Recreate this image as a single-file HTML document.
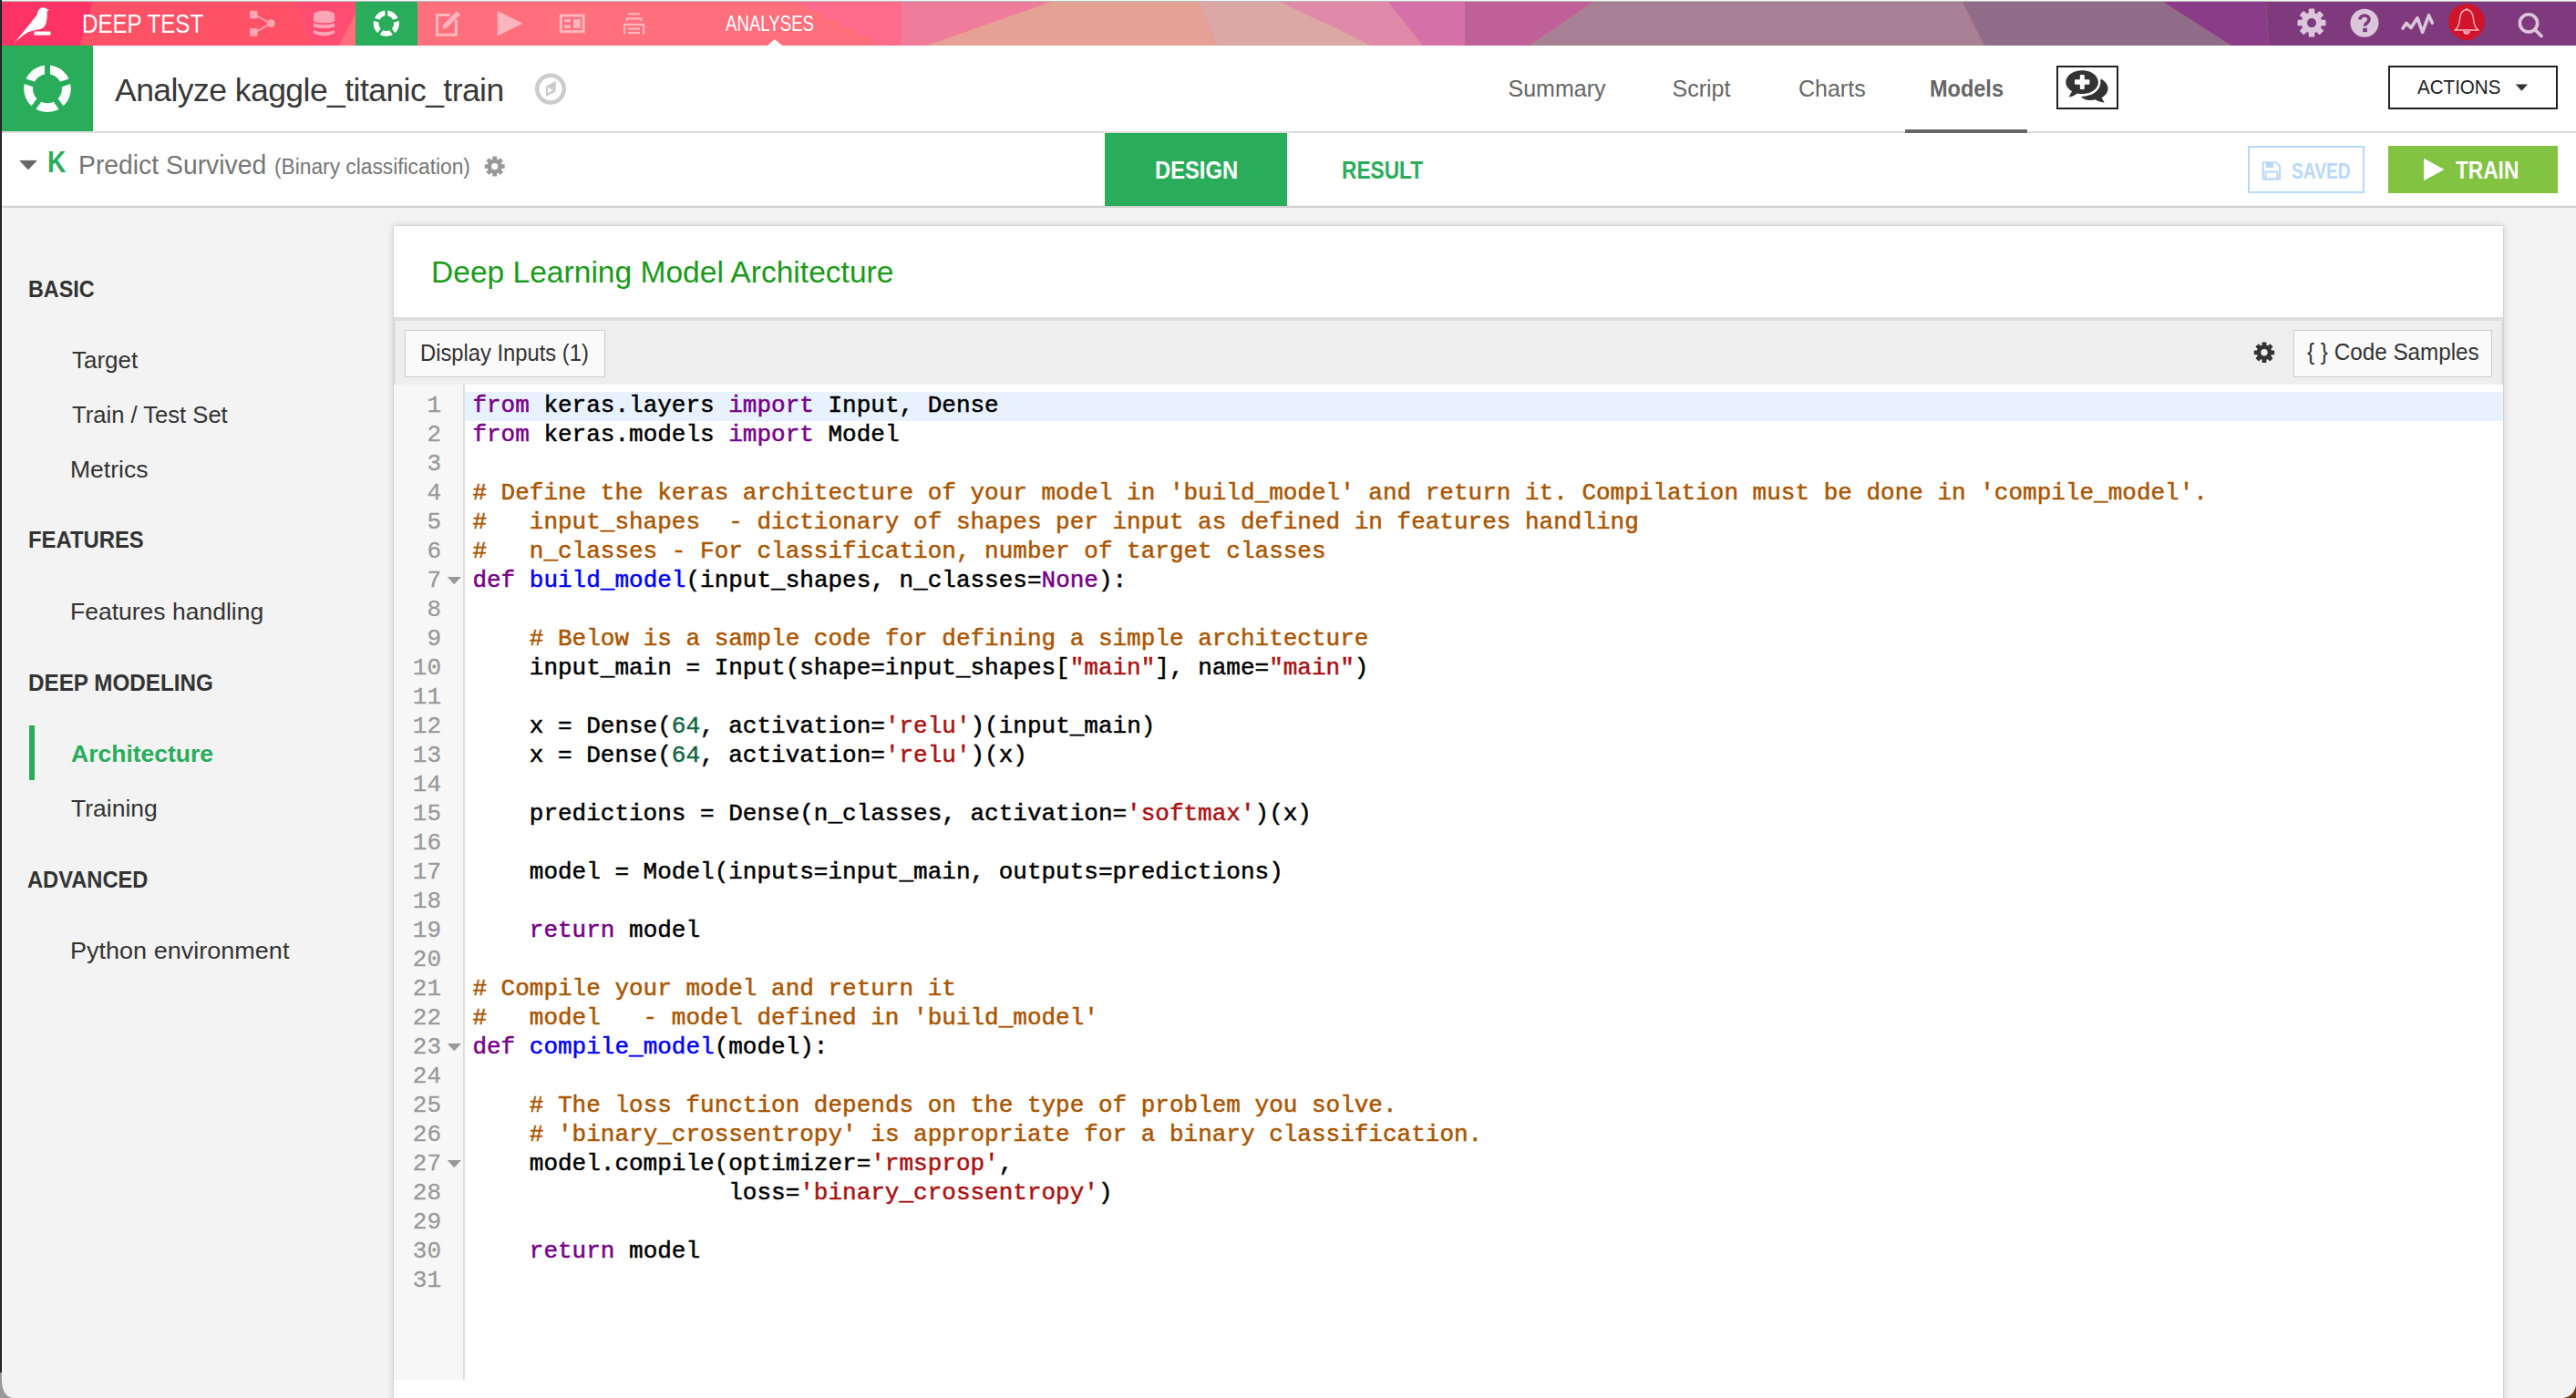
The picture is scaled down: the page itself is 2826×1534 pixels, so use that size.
<!DOCTYPE html><html><head><meta charset="utf-8"><style>
html,body{margin:0;padding:0;}
body{width:2826px;height:1534px;overflow:hidden;position:relative;background:#f3f3f3;font-family:"Liberation Sans", sans-serif;}
.t{position:absolute;white-space:pre;line-height:1;}
.code{position:absolute;font-family:"Liberation Mono", monospace;font-size:26px;line-height:32px;white-space:pre;color:#000;-webkit-text-stroke:0.5px currentColor;}
.k{color:#770088} .d{color:#0000ff} .c{color:#aa5500} .s{color:#aa1111} .n{color:#116644} .a{color:#770088}
.ln{position:absolute;font-family:"Liberation Mono", monospace;font-size:26px;line-height:32px;color:#999;text-align:right;width:60px;white-space:pre;-webkit-text-stroke:0.3px currentColor;}
svg{position:absolute;left:0;top:0;overflow:visible}
</style></head><body><svg width="2826" height="50" viewBox="0 0 2826 50">
<rect x="0" y="0" width="2826" height="1" fill="#f6f6f6"/><rect x="0" y="1" width="2826" height="1" fill="#b5b8b6"/>
<polygon points="0,2 2826,2 2826,50 0,50" fill="#ff6e7c"/>
<polygon points="0,2 102,2 88,50 0,50" fill="#ff3366"/>
<polygon points="102,2 323,2 342,50 88,50" fill="#ff5266"/>
<polygon points="323,2 390,2 390,15 372,50 342,50" fill="#ff4d72"/>
<polygon points="390,15 390,50 372,50" fill="#ff6e7a"/>
<polygon points="458,2 873,2 968,50 458,50" fill="#ff707c"/>
<polygon points="873,2 989,2 989,50 968,50" fill="#ff6b8b"/>
<polygon points="989,2 1153,2 1016,50 989,50" fill="#f07c9c"/>
<polygon points="1153,2 1315,2 1335,50 1016,50" fill="#e5a196"/>
<polygon points="1315,2 1405,2 1504,50 1335,50" fill="#dba8a5"/>
<polygon points="1405,2 1523,2 1561,50 1504,50" fill="#de8aa8"/>
<polygon points="1450,23 1504,50 1450,50" fill="#dba8a5"/>
<polygon points="1523,2 1607,2 1607,50 1561,50" fill="#d670a8"/>
<polygon points="1607,2 1748,2 1678,50 1607,50" fill="#c06098"/>
<polygon points="1748,2 2153,2 2177,50 1678,50" fill="#a88094"/>
<polygon points="2153,2 2373,2 2448,50 2177,50" fill="#906c88"/>
<polygon points="2373,2 2486,2 2489,50 2448,50" fill="#8a3c88"/>
<polygon points="2486,2 2826,2 2826,50 2489,50" fill="#7e3a7c"/>
<polygon points="390,2 458,2 458,50 390,50" fill="#29ad5b"/>
<path d="M16.3,46.5 L40.5,16.5 C41.5,12 43,9 46.5,8.3 C49,8 50.8,9 51.8,10.2 L54,10.3 L51.6,12.6 C51.9,16 51.8,22 50.3,26.5 C48.8,30 46,31.8 43,32.2 L36.5,33.6 C30,35 24,39.5 16.3,46.5 Z" fill="#fff"/>
<rect x="37.5" y="34.5" width="18" height="4.2" fill="#fff"/>
<g fill="#ffa5b0"><rect x="274" y="11.8" width="8.5" height="8.5"/><rect x="274" y="31.2" width="8.5" height="8.5"/><circle cx="297.3" cy="25.7" r="4.4"/></g>
<path d="M281,17 L297,25.7 L281,35" stroke="#ffa5b0" stroke-width="1.6" fill="none"/>
<g fill="#ffa5b8"><ellipse cx="355.5" cy="16" rx="11.6" ry="4.2"/><rect x="343.9" y="16" width="23.2" height="6.5"/><ellipse cx="355.5" cy="22.3" rx="11.6" ry="3"/><path d="M343.9,25.3 Q355.5,29 367.1,25.3 L367.1,29.5 Q355.5,33 343.9,29.5 Z"/><path d="M343.9,33.3 Q355.5,37 367.1,33.3 L367.1,36.5 Q355.5,42 343.9,36.5 Z"/></g>
<circle cx="423.8" cy="25.7" r="11.25" fill="none" stroke="#fff" stroke-width="5.699999999999999"/><rect x="422.3" y="10.6" width="3.0" height="7.699999999999999" fill="#29ad5b" transform="rotate(0 423.8 25.7)"/><rect x="422.3" y="10.6" width="3.0" height="7.699999999999999" fill="#29ad5b" transform="rotate(72 423.8 25.7)"/><rect x="422.3" y="10.6" width="3.0" height="7.699999999999999" fill="#29ad5b" transform="rotate(144 423.8 25.7)"/><rect x="422.3" y="10.6" width="3.0" height="7.699999999999999" fill="#29ad5b" transform="rotate(216 423.8 25.7)"/><rect x="422.3" y="10.6" width="3.0" height="7.699999999999999" fill="#29ad5b" transform="rotate(288 423.8 25.7)"/>
<path d="M494,16.6 L479.5,16.6 L479.5,38.3 L500.4,38.3 L500.4,22" stroke="#ffb5bd" stroke-width="3" fill="none"/>
<path d="M485.2,31.7 L486.5,26.8 L501.2,12.2 L505,16 L490.3,30.5 Z" fill="#ffb5bd"/>
<polygon points="545.8,12.1 545.8,39.5 573.5,25.7" fill="#ffb5bd"/>
<rect x="615.4" y="17.1" width="24.7" height="17.5" stroke="#ffb5bd" stroke-width="3" fill="none"/>
<g fill="#ffb5bd"><rect x="619" y="21.2" width="7" height="3"/><rect x="619" y="27.5" width="7" height="3.5"/><rect x="629" y="21" width="7.6" height="10"/></g>
<g stroke="#ffb5bd" fill="none" stroke-width="2.2" stroke-linejoin="round"><path d="M689,15.3 H702"/><path d="M687.6,23.2 V20.3 H703.6 V23.2"/><path d="M685.1,37.4 V26.8 H706.1 V37.4"/><path d="M689,31.5 H702"/><path d="M689,36 H702"/></g>
<polygon points="842,50 858,50 850,43" fill="#fff"/>
<g fill="#dcc6dc"><circle cx="2536" cy="25.1" r="11.3"/><rect x="2532.75" y="9.600000000000001" width="6.5" height="15.5" rx="0.975" transform="rotate(0.0 2536 25.1)"/><rect x="2532.75" y="9.600000000000001" width="6.5" height="15.5" rx="0.975" transform="rotate(45.0 2536 25.1)"/><rect x="2532.75" y="9.600000000000001" width="6.5" height="15.5" rx="0.975" transform="rotate(90.0 2536 25.1)"/><rect x="2532.75" y="9.600000000000001" width="6.5" height="15.5" rx="0.975" transform="rotate(135.0 2536 25.1)"/><rect x="2532.75" y="9.600000000000001" width="6.5" height="15.5" rx="0.975" transform="rotate(180.0 2536 25.1)"/><rect x="2532.75" y="9.600000000000001" width="6.5" height="15.5" rx="0.975" transform="rotate(225.0 2536 25.1)"/><rect x="2532.75" y="9.600000000000001" width="6.5" height="15.5" rx="0.975" transform="rotate(270.0 2536 25.1)"/><rect x="2532.75" y="9.600000000000001" width="6.5" height="15.5" rx="0.975" transform="rotate(315.0 2536 25.1)"/></g>
<circle cx="2536" cy="25.1" r="5" fill="#7e3a7c"/>
<circle cx="2594" cy="25.3" r="15.5" fill="#dcc6dc"/>
<path d="M2589,21.5 C2589,15.5 2599,15.5 2599,21.5 C2599,25 2594.5,25 2594.5,28.5" stroke="#7e3a7c" stroke-width="3.6" fill="none"/><rect x="2592.2" y="30.8" width="4.6" height="4.3" fill="#7e3a7c"/>
<polyline points="2636,31 2640,25.4 2645,30.5 2652,19.7 2657.6,35.3 2664.5,16.8 2668.3,25.2" stroke="#dcc6dc" stroke-width="3.6" fill="none" stroke-linecap="round" stroke-linejoin="round"/>
<circle cx="2706" cy="23.9" r="20" fill="#d0142c"/>
<path d="M2706,10.5 C2701,11 2699,14.5 2698.5,21 C2698,27 2697,30 2693.5,33 L2718.5,33 C2715,30 2714,27 2713.5,21 C2713,14.5 2711,11 2706,10.5 Z" stroke="#f6b8c2" stroke-width="1.4" fill="none"/>
<path d="M2703,34 A3,3 0 0 0 2709,34" stroke="#f6b8c2" stroke-width="1.4" fill="#e88"/>
<circle cx="2706" cy="10.2" r="1.2" fill="#f6b8c2"/>
<circle cx="2774" cy="25.4" r="9.6" stroke="#dcc6dc" stroke-width="3.6" fill="none"/><path d="M2781,32.5 L2788,39.5" stroke="#dcc6dc" stroke-width="3.8" stroke-linecap="round"/>
</svg>
<div class="t" style="left:90.0px;top:11.2px;font-size:30px;color:#fff;font-weight:normal;transform:scaleX(0.804);transform-origin:0 0;">DEEP TEST</div>
<div class="t" style="left:796.0px;top:14.5px;font-size:23px;color:#fff;font-weight:normal;transform:scaleX(0.81);transform-origin:0 0;">ANALYSES</div>
<div style="position:absolute;left:0px;top:0px;width:1px;height:1506px;background:#262a2e;z-index:5"></div>
<div style="position:absolute;left:1px;top:0px;width:1px;height:1506px;background:#121c1e;z-index:5"></div>
<div style="position:absolute;left:0px;top:1506px;width:2px;height:28px;background:#999;z-index:5"></div>
<div style="position:absolute;left:2px;top:227px;width:1px;height:1290px;background:#fff;z-index:5"></div>
<svg width="2826" height="1534" style="z-index:6"><path d="M0,1514 L2,1514 Q2,1532 14,1534 L0,1534 Z" fill="#9a9a9a"/><path d="M2826,1520 Q2824,1532 2812,1534 L2826,1534 Z" fill="#6b3a10"/></svg>
<div style="position:absolute;left:2px;top:50px;width:2824px;height:94px;background:#fff"></div>
<div style="position:absolute;left:2px;top:50px;width:100px;height:94px;background:#29ad5b"></div>
<div style="position:absolute;left:2px;top:144px;width:2824px;height:2px;background:#dddddd"></div>
<div style="position:absolute;left:2px;top:146px;width:2824px;height:79px;background:#fff"></div>
<div style="position:absolute;left:2px;top:226px;width:2824px;height:1.6px;background:#d0d0d0"></div>
<svg width="2826" height="240">
<circle cx="52" cy="97.3" r="20.9" fill="none" stroke="#fff" stroke-width="9.8"/><rect x="49.0" y="70.5" width="6.0" height="11.8" fill="#29ad5b" transform="rotate(0 52 97.3)"/><rect x="49.0" y="70.5" width="6.0" height="11.8" fill="#29ad5b" transform="rotate(72 52 97.3)"/><rect x="49.0" y="70.5" width="6.0" height="11.8" fill="#29ad5b" transform="rotate(144 52 97.3)"/><rect x="49.0" y="70.5" width="6.0" height="11.8" fill="#29ad5b" transform="rotate(216 52 97.3)"/><rect x="49.0" y="70.5" width="6.0" height="11.8" fill="#29ad5b" transform="rotate(288 52 97.3)"/>
<circle cx="604" cy="97.6" r="14.8" stroke="#cccccc" stroke-width="4.5" fill="none"/>
<path d="M598.9,94.4 L609.7,88.9 L609.7,100.5 L598.9,106 Z M601.1,96 L601.1,102 L606.4,99.1 Z" fill="#cccccc" fill-rule="evenodd"/>
<path d="M2305.2,86.6 C2310,90 2312.5,93 2312.5,97 C2312.5,101.5 2309.5,105 2305.5,107.3 L2308.8,112.8 C2304,112 2300.5,110.5 2298.5,109.3 C2296.5,109.7 2295,109.9 2293,109.9 C2289,109.9 2285.5,108.5 2283,106.6 L2300,95 Z" fill="#333"/>
<ellipse cx="2284.1" cy="90.2" rx="20.3" ry="15.6" fill="#fff"/>
<path d="M2269.5,106.6 L2273,100.3 C2268,97 2266.3,93.5 2266.3,90.2 C2266.3,83 2274,77.2 2284.1,77.2 C2294,77.2 2301.9,83 2301.9,90.2 C2301.9,97.5 2294,103.1 2284.1,103.1 C2282,103.1 2280.5,103 2279,102.6 C2276,105 2273,106.3 2269.5,106.6 Z" fill="#333"/>
<rect x="2276" y="87.2" width="16.4" height="5.6" rx="1" fill="#fff"/><rect x="2281.8" y="81.9" width="5" height="16.2" rx="1" fill="#fff"/>
<polygon points="2759.8,92.4 2773,92.4 2766.4,99.8" fill="#333"/>
<polygon points="22,176.4 40,176.4 31,185.8" fill="#666" stroke="#666" stroke-width="1" stroke-linejoin="round"/>
<g fill="#999"><circle cx="542.7" cy="182.6" r="8"/><rect x="540.3000000000001" y="171.6" width="4.8" height="11" rx="0.72" transform="rotate(0.0 542.7 182.6)"/><rect x="540.3000000000001" y="171.6" width="4.8" height="11" rx="0.72" transform="rotate(45.0 542.7 182.6)"/><rect x="540.3000000000001" y="171.6" width="4.8" height="11" rx="0.72" transform="rotate(90.0 542.7 182.6)"/><rect x="540.3000000000001" y="171.6" width="4.8" height="11" rx="0.72" transform="rotate(135.0 542.7 182.6)"/><rect x="540.3000000000001" y="171.6" width="4.8" height="11" rx="0.72" transform="rotate(180.0 542.7 182.6)"/><rect x="540.3000000000001" y="171.6" width="4.8" height="11" rx="0.72" transform="rotate(225.0 542.7 182.6)"/><rect x="540.3000000000001" y="171.6" width="4.8" height="11" rx="0.72" transform="rotate(270.0 542.7 182.6)"/><rect x="540.3000000000001" y="171.6" width="4.8" height="11" rx="0.72" transform="rotate(315.0 542.7 182.6)"/></g>
<circle cx="542.7" cy="182.6" r="3.6" fill="#fff"/>
<path d="M2482.7,178.2 H2497 L2501.1,182.3 V196.6 H2482.7 Z" stroke="#b8d8f8" stroke-width="2" fill="none"/>
<rect x="2486" y="178.5" width="8" height="5.5" fill="#b8d8f8"/><rect x="2485.5" y="188.5" width="13" height="8" stroke="#b8d8f8" stroke-width="2" fill="none"/>
</svg>
<div class="t" style="left:126.0px;top:82.2px;font-size:35.5px;color:#383838;font-weight:normal;letter-spacing:-0.55px;">Analyze kaggle_titanic_train</div>
<div class="t" style="left:1654.5px;top:84.9px;font-size:25px;color:#666;font-weight:normal;">Summary</div>
<div class="t" style="left:1834.5px;top:84.9px;font-size:25px;color:#666;font-weight:normal;transform:scaleX(1.0);transform-origin:0 0;">Script</div>
<div class="t" style="left:1973.0px;top:84.9px;font-size:25px;color:#666;font-weight:normal;">Charts</div>
<div class="t" style="left:2117.0px;top:84.9px;font-size:25px;color:#666;font-weight:bold;transform:scaleX(0.94);transform-origin:0 0;">Models</div>
<div style="position:absolute;left:2090px;top:142px;width:134px;height:4px;background:#666;z-index:2"></div>
<div style="position:absolute;left:2256px;top:72px;width:68px;height:48px;border:2px solid #222;box-sizing:border-box"></div>
<div style="position:absolute;left:2620px;top:72px;width:186px;height:48px;border:2px solid #222;box-sizing:border-box"></div>
<div class="t" style="left:2652.3px;top:85.0px;font-size:22.5px;color:#222;font-weight:normal;transform:scaleX(0.914);transform-origin:0 0;">ACTIONS</div>
<div class="t" style="left:51.5px;top:161.3px;font-size:33.5px;color:#29ad5b;font-weight:bold;transform:scaleX(0.84);transform-origin:0 0;">K</div>
<div class="t" style="left:86.0px;top:166.2px;font-size:30px;color:#767676;font-weight:normal;transform:scaleX(0.944);transform-origin:0 0;">Predict Survived</div>
<div class="t" style="left:301.0px;top:172.0px;font-size:23px;color:#767676;font-weight:normal;transform:scaleX(0.989);transform-origin:0 0;">(Binary classification)</div>
<div style="position:absolute;left:1212px;top:146px;width:200px;height:80px;background:#29ad5b"></div>
<div class="t" style="left:1267.0px;top:174.0px;font-size:27px;color:#fff;font-weight:bold;transform:scaleX(0.88);transform-origin:0 0;">DESIGN</div>
<div class="t" style="left:1472.0px;top:174.0px;font-size:27px;color:#29ad5b;font-weight:bold;transform:scaleX(0.841);transform-origin:0 0;">RESULT</div>
<div style="position:absolute;left:2466px;top:160px;width:128px;height:52px;border:2px solid #b8d8f8;box-sizing:border-box"></div>
<div class="t" style="left:2513.7px;top:176.8px;font-size:23px;color:#b8d8f8;font-weight:bold;transform:scaleX(0.834);transform-origin:0 0;">SAVED</div>
<div style="position:absolute;left:2620px;top:160px;width:186px;height:52px;background:#82c341"></div>
<svg width="2826" height="240"><polygon points="2659,173.8 2659,198.2 2681.5,186" fill="#fff"/></svg>
<div class="t" style="left:2694.4px;top:174.1px;font-size:27px;color:#fff;font-weight:bold;transform:scaleX(0.84);transform-origin:0 0;">TRAIN</div>
<div class="t" style="left:31.0px;top:303.5px;font-size:26.5px;color:#333;font-weight:bold;transform:scaleX(0.881);transform-origin:0 0;">BASIC</div>
<div class="t" style="left:79.0px;top:382.1px;font-size:26.5px;color:#333;font-weight:normal;transform:scaleX(0.98);transform-origin:0 0;">Target</div>
<div class="t" style="left:79.0px;top:441.6px;font-size:26.5px;color:#333;font-weight:normal;transform:scaleX(0.966);transform-origin:0 0;">Train / Test Set</div>
<div class="t" style="left:77.0px;top:501.6px;font-size:26.5px;color:#333;font-weight:normal;">Metrics</div>
<div class="t" style="left:31.0px;top:579.2px;font-size:26.5px;color:#333;font-weight:bold;transform:scaleX(0.9);transform-origin:0 0;">FEATURES</div>
<div class="t" style="left:77.0px;top:658.1px;font-size:26.5px;color:#333;font-weight:normal;">Features handling</div>
<div class="t" style="left:31.0px;top:735.6px;font-size:26.5px;color:#333;font-weight:bold;transform:scaleX(0.914);transform-origin:0 0;">DEEP MODELING</div>
<div style="position:absolute;left:32px;top:796px;width:6px;height:60px;background:#29ad5b"></div>
<div class="t" style="left:78.0px;top:813.6px;font-size:26.5px;color:#29ad5b;font-weight:bold;">Architecture</div>
<div class="t" style="left:78.0px;top:873.6px;font-size:26.5px;color:#333;font-weight:normal;">Training</div>
<div class="t" style="left:30.0px;top:951.6px;font-size:26.5px;color:#333;font-weight:bold;transform:scaleX(0.893);transform-origin:0 0;">ADVANCED</div>
<div class="t" style="left:77.0px;top:1029.6px;font-size:26.5px;color:#333;font-weight:normal;transform:scaleX(1.02);transform-origin:0 0;">Python environment</div>
<div style="position:absolute;left:432px;top:248px;width:2314px;height:1400px;background:#fff;box-shadow:0 0 0 1px rgba(0,0,0,.06),0 0 8px 1px rgba(0,0,0,.13)"></div>
<div class="t" style="left:472.6px;top:281.0px;font-size:34px;color:#1a9a1a;font-weight:normal;transform:scaleX(0.987);transform-origin:0 0;">Deep Learning Model Architecture</div>
<div style="position:absolute;left:432px;top:348px;width:2314px;height:74px;background:#eeeeee;border-top:4px solid #dddddd;box-sizing:border-box;border-left:2px solid #dedede;border-right:2px solid #dedede"></div>
<div style="position:absolute;left:444px;top:362px;width:220px;height:52px;background:#fafafa;border:1.8px solid #cccccc;box-sizing:border-box"></div>
<div class="t" style="left:461.0px;top:374.8px;font-size:25px;color:#333;font-weight:normal;transform:scaleX(0.95);transform-origin:0 0;">Display Inputs (1)</div>
<div style="position:absolute;left:2516px;top:362px;width:218px;height:52px;background:#fafafa;border:1.8px solid #cccccc;box-sizing:border-box"></div>
<div class="t" style="left:2531.0px;top:373.8px;font-size:25px;color:#333;font-weight:normal;transform:scaleX(0.97);transform-origin:0 0;">{ } Code Samples</div>
<svg width="2826" height="1534">
<g fill="#333"><circle cx="2484" cy="386.8" r="8.3"/><rect x="2481.6" y="375.6" width="4.8" height="11.2" rx="0.72" transform="rotate(0.0 2484 386.8)"/><rect x="2481.6" y="375.6" width="4.8" height="11.2" rx="0.72" transform="rotate(45.0 2484 386.8)"/><rect x="2481.6" y="375.6" width="4.8" height="11.2" rx="0.72" transform="rotate(90.0 2484 386.8)"/><rect x="2481.6" y="375.6" width="4.8" height="11.2" rx="0.72" transform="rotate(135.0 2484 386.8)"/><rect x="2481.6" y="375.6" width="4.8" height="11.2" rx="0.72" transform="rotate(180.0 2484 386.8)"/><rect x="2481.6" y="375.6" width="4.8" height="11.2" rx="0.72" transform="rotate(225.0 2484 386.8)"/><rect x="2481.6" y="375.6" width="4.8" height="11.2" rx="0.72" transform="rotate(270.0 2484 386.8)"/><rect x="2481.6" y="375.6" width="4.8" height="11.2" rx="0.72" transform="rotate(315.0 2484 386.8)"/></g>
<circle cx="2484" cy="386.8" r="3.7" fill="#eeeeee"/>
</svg>
<div style="position:absolute;left:432px;top:422px;width:78px;height:1092px;background:#f7f7f7;border-right:2px solid #dddddd;box-sizing:border-box"></div>
<div style="position:absolute;left:510px;top:430px;width:2236px;height:32px;background:#e8f2ff"></div>
<div class="code" style="left:518.4px;top:429px"><span class="k">from</span> keras.layers <span class="k">import</span> Input, Dense
<span class="k">from</span> keras.models <span class="k">import</span> Model

<span class="c"># Define the keras architecture of your model in &#x27;build_model&#x27; and return it. Compilation must be done in &#x27;compile_model&#x27;.</span>
<span class="c">#   input_shapes  - dictionary of shapes per input as defined in features handling</span>
<span class="c">#   n_classes - For classification, number of target classes</span>
<span class="k">def</span> <span class="d">build_model</span>(input_shapes, n_classes=<span class="a">None</span>):

    <span class="c"># Below is a sample code for defining a simple architecture</span>
    input_main = Input(shape=input_shapes[<span class="s">&quot;main&quot;</span>], name=<span class="s">&quot;main&quot;</span>)

    x = Dense(<span class="n">64</span>, activation=<span class="s">&#x27;relu&#x27;</span>)(input_main)
    x = Dense(<span class="n">64</span>, activation=<span class="s">&#x27;relu&#x27;</span>)(x)

    predictions = Dense(n_classes, activation=<span class="s">&#x27;softmax&#x27;</span>)(x)

    model = Model(inputs=input_main, outputs=predictions)

    <span class="k">return</span> model

<span class="c"># Compile your model and return it</span>
<span class="c">#   model   - model defined in &#x27;build_model&#x27;</span>
<span class="k">def</span> <span class="d">compile_model</span>(model):

    <span class="c"># The loss function depends on the type of problem you solve.</span>
    <span class="c"># &#x27;binary_crossentropy&#x27; is appropriate for a binary classification.</span>
    model.compile(optimizer=<span class="s">&#x27;rmsprop&#x27;</span>,
                  loss=<span class="s">&#x27;binary_crossentropy&#x27;</span>)

    <span class="k">return</span> model
</div>
<div class="ln" style="left:424px;top:429px">1
2
3
4
5
6
7
8
9
10
11
12
13
14
15
16
17
18
19
20
21
22
23
24
25
26
27
28
29
30
31</div>
<svg style="left:490px;top:632px" width="17" height="10"><polygon points="0.7,1 16,1 8.3,9.2" fill="#999"/></svg>
<svg style="left:490px;top:1144px" width="17" height="10"><polygon points="0.7,1 16,1 8.3,9.2" fill="#999"/></svg>
<svg style="left:490px;top:1272px" width="17" height="10"><polygon points="0.7,1 16,1 8.3,9.2" fill="#999"/></svg></body></html>
